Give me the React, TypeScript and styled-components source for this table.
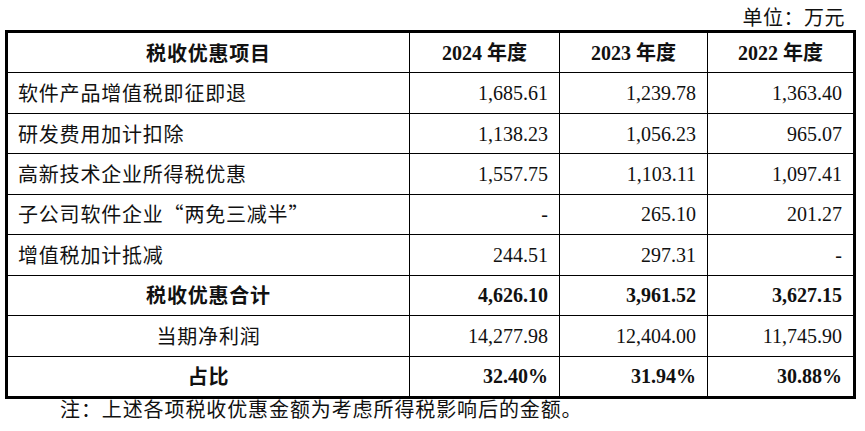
import React from "react";
import styled, { createGlobalStyle } from "styled-components";

const GlobalStyle = createGlobalStyle`
  html, body {
    margin: 0;
    padding: 0;
    background: #ffffff;
  }
  body {
    font-family: "Liberation Serif", "Noto Sans CJK SC", serif;
    color: #111111;
  }
`;

type Row = {
  label: string;
  values: string[];
  kind?: "total" | "centered";
};

const rows: Row[] = [
  { label: "软件产品增值税即征即退", values: ["1,685.61", "1,239.78", "1,363.40"] },
  { label: "研发费用加计扣除", values: ["1,138.23", "1,056.23", "965.07"] },
  { label: "高新技术企业所得税优惠", values: ["1,557.75", "1,103.11", "1,097.41"] },
  { label: "子公司软件企业“两免三减半”", values: ["-", "265.10", "201.27"] },
  { label: "增值税加计抵减", values: ["244.51", "297.31", "-"] },
  { label: "税收优惠合计", values: ["4,626.10", "3,961.52", "3,627.15"], kind: "total" },
  { label: "当期净利润", values: ["14,277.98", "12,404.00", "11,745.90"], kind: "centered" },
  { label: "占比", values: ["32.40%", "31.94%", "30.88%"], kind: "total" },
];

const Page = styled.div`
  width: 865px;
  height: 431px;
  overflow: hidden;
`;

const Unit = styled.div`
  height: 30px;
  padding: 4px 20px 0 0;
  box-sizing: border-box;
  text-align: right;
  font-family: "Noto Sans CJK SC", sans-serif;
  font-size: 20px;
  line-height: 26px;
  letter-spacing: 0.5px;
`;

const Table = styled.table`
  margin-left: 5px;
  width: 851px;
  border: 3px solid #000;
  border-spacing: 0;
  border-collapse: separate;
  table-layout: fixed;
`;

const Cell = styled.td<{ $align?: "left" | "center" | "right"; $bold?: boolean; $last?: boolean; $bottom?: boolean }>`
  height: 39.44px;
  padding: ${(p) => (p.$align === "left" ? "0 0 0 10px" : p.$align === "right" ? "0 11px 0 0" : "0")};
  text-align: ${(p) => p.$align ?? "center"};
  font-size: 20px;
  line-height: 24px;
  font-weight: ${(p) => (p.$bold ? 700 : 400)};
  border-right: ${(p) => (p.$last ? "none" : "1px solid #000")};
  border-bottom: ${(p) => (p.$bottom ? "none" : "1px solid #000")};
  white-space: nowrap;
  vertical-align: middle;
`;

const Label = styled(Cell)`
  font-family: "Noto Sans CJK SC", sans-serif;
  letter-spacing: 0.8px;
`;

const Note = styled.div`
  padding: 0 0 0 60px;
  font-family: "Noto Sans CJK SC", sans-serif;
  font-size: 20px;
  line-height: 20px;
  letter-spacing: 0.9px;
`;

export default function App() {
  return (
    <Page>
      <GlobalStyle />
      <Unit>单位：万元</Unit>
      <Table>
        <colgroup>
          <col style={{ width: 402 }} />
          <col style={{ width: 150 }} />
          <col style={{ width: 148 }} />
          <col style={{ width: 145 }} />
        </colgroup>
        <thead>
          <tr>
            <Label as="th" $bold>税收优惠项目</Label>
            <Cell as="th" $bold>2024 年度</Cell>
            <Cell as="th" $bold>2023 年度</Cell>
            <Cell as="th" $bold $last>2022 年度</Cell>
          </tr>
        </thead>
        <tbody>
          {rows.map((r, i) => {
            const bottom = i === rows.length - 1;
            const bold = r.kind === "total";
            return (
              <tr key={r.label}>
                <Label $align={r.kind ? "center" : "left"} $bold={bold} $bottom={bottom}>
                  {r.label}
                </Label>
                {r.values.map((v, j) => (
                  <Cell key={j} $align="right" $bold={bold} $bottom={bottom} $last={j === 2}>
                    {v}
                  </Cell>
                ))}
              </tr>
            );
          })}
        </tbody>
      </Table>
      <Note>注：上述各项税收优惠金额为考虑所得税影响后的金额。</Note>
    </Page>
  );
}
